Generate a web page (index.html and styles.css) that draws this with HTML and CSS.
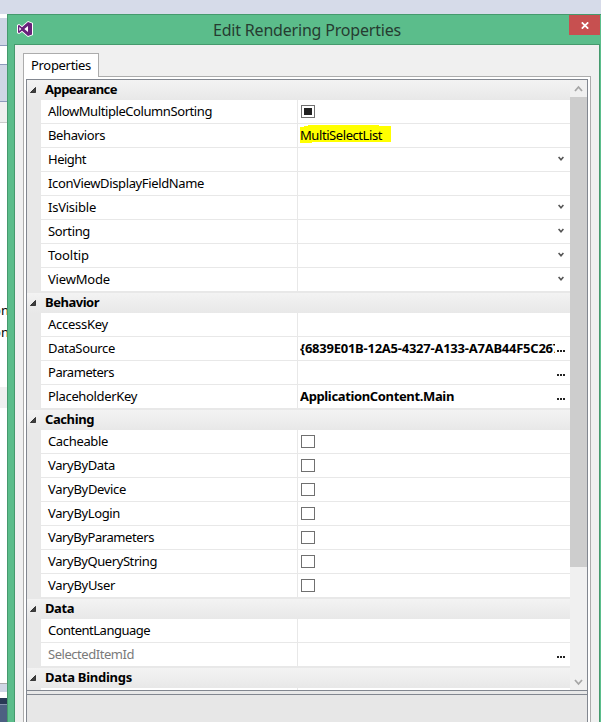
FILE: index.html
```html
<!DOCTYPE html>
<html lang="en">
<head>
<meta charset="utf-8">
<title>Edit Rendering Properties</title>
<link rel="stylesheet" href="styles.css">
</head>
<body>
<div class="backdrop">
  <div class="b-gap"></div><div class="b-blue b1"></div><div class="b-white b2"></div><div class="b-blue b3"></div><div class="b-grey b4"></div>
  <div class="b-code"><span>on</span><span>on</span></div>
  <div class="b-grey b5"></div><div class="b-white b6"></div><div class="b-blue b7"></div><div class="b-gap b8"></div><div class="b-navy"></div><div class="b-slate"></div>
</div>
<main class="window">
  <header class="titlebar">
    <svg class="logo" viewBox="0 0 16 16"><path d="M0 4l2-1 3 2 6-5 5 2v12l-5 2-6-5-3 2-2-1z" fill="#fff"/><path fill-rule="evenodd" d="M1 4.500l1.200-.6L5 6.300 11 1l4 1.500v11L11 15 5 9.700 2.200 12 1 11.500zM2.300 6v4L4.300 8zM11 5L7.300 8 11 11z" fill="#68217a"/></svg>
    <h1><span class="fit" data-w="188">Edit Rendering Properties</span></h1>
    <button class="close" aria-label="Close"><svg viewBox="0 0 8 7"><path d="M.8.300L7.200 6.700M7.200.300L.8 6.700" stroke="#fff" stroke-width="1.700"/></svg></button>
  </header>
  <section class="client">
    <div class="tab"><span class="fit" data-w="60">Properties</span></div>
    <div class="pane">
      <div class="grid">
        <div class="rows" id="rows"></div>
        <div class="scroll">
          <svg class="up" viewBox="0 0 17 17"><path d="M5 11l3.500-4 3.500 4" fill="none" stroke="#a6a6a6" stroke-width="1.800"/></svg>
          <div class="thumb"></div>
          <svg class="down" viewBox="0 0 17 17"><path d="M5 7l3.500 4 3.500-4" fill="none" stroke="#a6a6a6" stroke-width="1.800"/></svg>
        </div>
      </div>
      <div class="splitter"></div>
      <div class="help"></div>
    </div>
  </section>
</main>
<script src="app.js"></script>
</body>
</html>
```
FILE: styles.css
```css
* { box-sizing: border-box; }
body { margin: 0; width: 601px; height: 722px; overflow: hidden; display: flex; padding-top: 14px; background: #d6dbe9; font: 13px/16px "Noto Sans", "Open Sans", sans-serif; color: #000; }
.backdrop { width: 7px; height: 708px; flex: none; display: flex; flex-direction: column; overflow: hidden; background: #fff; }
.backdrop > div { flex: none; }
.b-gap { height: 4px; background: #fff; }
.b-blue { background: #cfd6e5; border-bottom: 1px solid #8e9bbc; }
.b-grey { background: #f0f0f0; border-bottom: 1px solid #ccc; }
.b1 { height: 28px; }
.b2 { height: 19px; border-bottom: 1px solid #8e9bbc; }
.b3 { height: 37px; }
.b4 { height: 21px; }
.b-code { height: 264px; padding-top: 179px; display: flex; flex-direction: column; align-items: flex-end; gap: 6px; }
.b-code span { margin-right: -2px; }
.b5 { height: 21px; border: 0; }
.b6 { height: 276px; border-bottom: 1px solid #aaa; }
.b7 { height: 8px; border: 0; }
.b8 { height: 6px; }
.b-navy { height: 7px; background: #293955; border-bottom: 1px solid #8592ad; }
.b-slate { height: 17px; background: #4d6082; }
.window { flex: none; width: 594px; height: 708px; background: #5bbd8b; border-top: 1px solid #459a6d; border-left: 1px solid #459a6d; }
.titlebar { height: 29px; display: flex; align-items: flex-start; padding-left: 9px; }
.logo { width: 16px; height: 16px; margin-top: 6px; flex: none; }
h1 { flex: 1; margin: 5px 0 0 180px; font-size: 16px; line-height: 20px; font-weight: 400; color: #263c31; }
.close { width: 31px; height: 20px; margin-right: 1px; border: 0; padding: 0 0 0 1px; background: #c75050; display: flex; align-items: center; justify-content: center; flex: none; }
.close svg { width: 8px; height: 7px; }
.client { margin-left: 6px; width: 586px; height: 680px; background: #f0f0f0; border: 1px solid #459a6d; border-bottom: 0; padding: 8px 8px 0; }
.tab { width: 76px; height: 24px; margin-bottom: -1px; border: 1px solid #acacac; border-bottom: 0; background: #fff; padding: 3px 0 0 7px; position: relative; }
.pane { height: 648px; background: #fff; border: 1px solid #acacac; border-bottom: 0; padding: 2px 2px 0; display: flex; flex-direction: column; }
.grid { height: 612px; flex: none; border: 1px solid #828790; display: flex; overflow: hidden; }
.rows { width: 543px; height: 610px; overflow: hidden; background: #e8e8e8; }
.cat { height: 20px; display: flex; align-items: flex-start; padding: 1px 0 0 3px; background: linear-gradient(#f3f3f3, #e8e8e8); font-weight: 700; }
.cat:not(:first-child) { margin-top: 1px; }
.cat svg { width: 6px; height: 6px; margin: 6px 9px 0 0; }
.row { height: 24px; margin-left: 14px; display: grid; grid-template-columns: 257px 1fr; background: #fff; border-bottom: 1px solid #e8e8e8; }
.label { padding: 3px 0 0 7px; border-right: 1px solid #e8e8e8; }
.row.disabled .label { color: #7a7a7a; }
.value { padding: 0 4px 0 2px; display: flex; align-items: flex-start; overflow: hidden; }
.txt { flex: none; width: 255px; margin-top: 3px; overflow: hidden; white-space: nowrap; }
.bold { font-weight: 700; }
.mark { position: relative; overflow: visible; }
.mark svg { position: absolute; left: 0; top: -2px; width: 91px; height: 18px; }
.mark .fit { position: relative; }
.fit { display: inline-block; white-space: nowrap; }
.box { width: 14px; height: 13px; margin: 5px 0 0 1px; border: 1px solid #707070; background: #fff; }
.box.mixed { padding: 2px; }
.box.mixed::before { content: ""; display: block; width: 8px; height: 7px; background: #212121; }
.chev { width: 6px; height: 5px; margin: 8px 2px 0 auto; }
.dots { display: flex; gap: 1px; margin: 13px 1px 0 auto; }
.dots i { width: 2px; height: 2px; background: #222; }
.scroll { width: 17px; height: 610px; background: #f0f0f0; display: flex; flex-direction: column; }
.scroll svg { width: 17px; height: 17px; flex: none; }
.thumb { height: 470px; background: #cdcdcd; }
.down { margin-top: auto; }
.splitter { height: 3px; flex: none; background: #e8e8e8; border-left: 1px solid #828790; border-right: 1px solid #828790; }
.help { flex: 1; background: #e7e7e7; border: 1px solid #828790; border-bottom: 0; }
```
FILE: app.js
```js
const data = [
  ["Appearance", 72, [["AllowMultipleColumnSorting", 164, "mixed"], ["Behaviors", 57, "mark"], ["Height", 38, "drop"], ["IconViewDisplayFieldName", 156, ""], ["IsVisible", 48, "drop"], ["Sorting", 42, "drop"], ["Tooltip", 41, "drop"], ["ViewMode", 62, "drop"]]],
  ["Behavior", 54, [["AccessKey", 60, ""], ["DataSource", 67, "{6839E01B-12A5-4327-A133-A7AB44F5C267", 260], ["Parameters", 66, "dots"], ["PlaceholderKey", 89, "ApplicationContent.Main", 154]]],
  ["Caching", 49, [["Cacheable", 60, "check"], ["VaryByData", 67, "check"], ["VaryByDevice", 78, "check"], ["VaryByLogin", 72, "check"], ["VaryByParameters", 106, "check"], ["VaryByQueryString", 109, "check"], ["VaryByUser", 67, "check"]]],
  ["Data", 29, [["ContentLanguage", 102, ""], ["SelectedItemId", 86, "dots"]]],
  ["Data Bindings", 87, [["", 0, ""]]]
];
const fit = (text, w) => `<span class="fit" data-w="${w}">${text}</span>`;
const dots = '<span class="dots"><i></i><i></i><i></i></span>';
const cell = (kind, w) => ({
  "": "",
  mixed: '<span class="box mixed"></span>',
  check: '<span class="box"></span>',
  drop: '<svg class="chev" viewBox="0 0 6 5"><path d="M.6 1L3 3.700 5.400 1" fill="none" stroke="#555" stroke-width="1.600"/></svg>',
  dots,
  mark: `<span class="txt mark"><svg viewBox="0 0 91 18"><path d="M0 2h4V1h4V0h71v1h12v16H12v1H0z" fill="#ff0"/></svg>${fit("MultiSelectList", 82)}</span>`
}[kind] ?? `<span class="txt bold">${fit(kind, w)}</span>${dots}`);
document.getElementById("rows").innerHTML = data.map(([name, w, rows]) =>
  `<div class="cat"><svg viewBox="0 0 7 7"><path d="M6.500.500v6h-6z" fill="#404040" stroke="#222"/></svg>${fit(name, w)}</div>` +
  rows.map(([label, lw, kind, vw]) => `<div class="row${label === "SelectedItemId" ? " disabled" : ""}"><div class="label">${fit(label, lw)}</div><div class="value">${cell(kind, vw)}</div></div>`).join("")
).join("");
document.querySelectorAll(".fit").forEach(el => {
  const n = el.textContent.length;
  if (n) el.style.letterSpacing = (el.dataset.w - el.getBoundingClientRect().width) / n + "px";
});
```
